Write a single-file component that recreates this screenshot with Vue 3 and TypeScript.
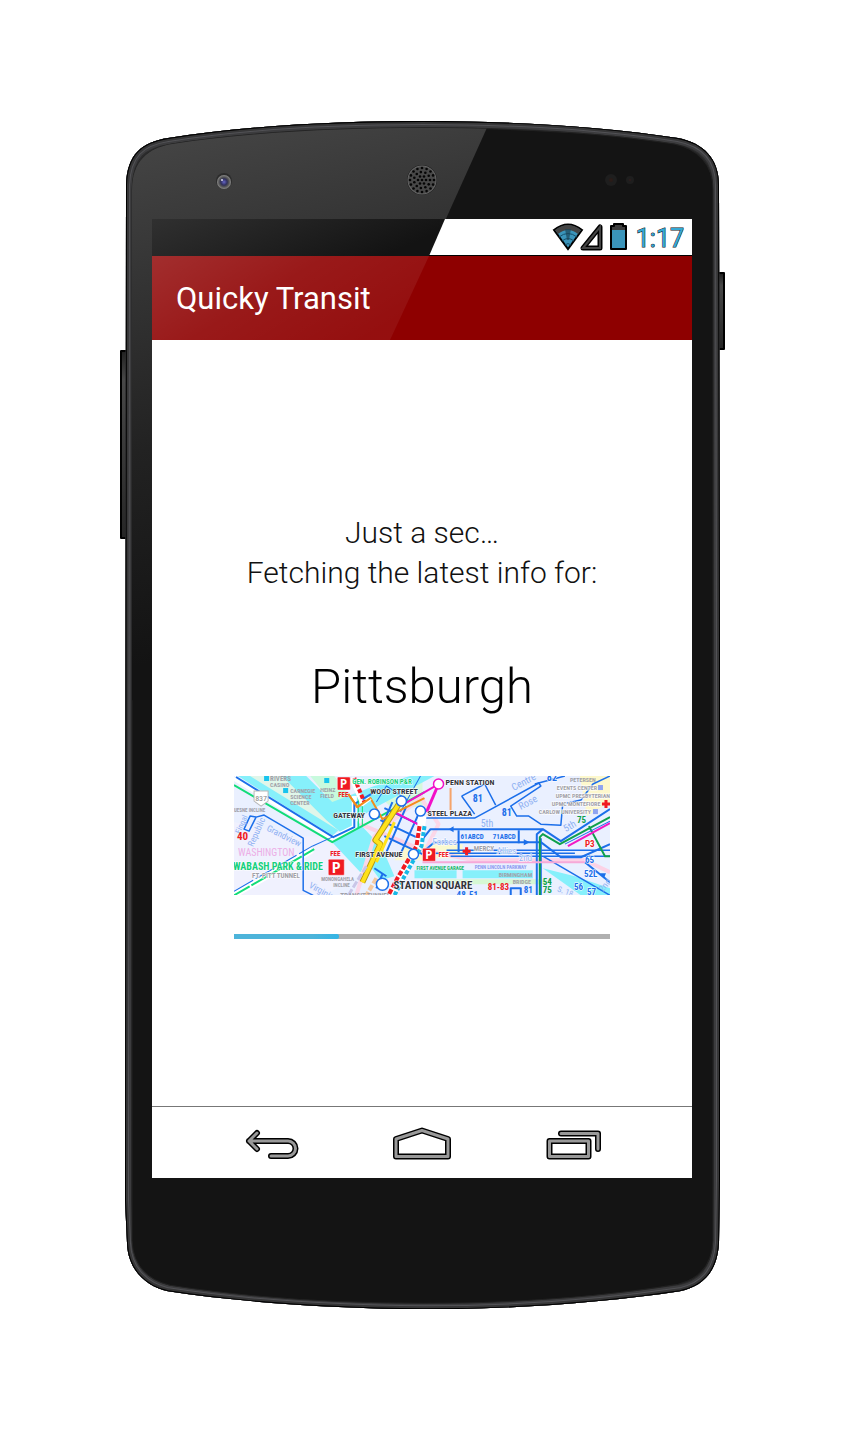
<script setup lang="ts">
interface Label {
  t: string
  x: number
  y: number
  s: number
  c: string
  r?: number
  w?: number
  halo?: boolean
}
interface Stroke {
  d: string
  c: string
  w: number
  dash?: string
}

const ink = '#33343c'
const grey = '#a0a0a8'
const blue = '#1c6fea'
const green = '#12dc78'
const darkGreen = '#0fa04c'
const red = '#f01a22'
const street = '#8fb0f2'

const areas = [
  { d: 'M0 46 L60 60 L120 60 L140 90 L90 119 L0 119Z', c: '#f0f1fe' },
  { d: 'M14 0 H60 L92 30 L104 56 L80 48Z', c: '#e0f6ea' },
  { d: 'M76 0 H100 L126 34 L112 44Z', c: '#c8fadd' },
  { d: 'M140 16 L188 2 V30 L160 34Z', c: '#d6f8dc' },
  { d: 'M170 70 H188 V84 H160Z', c: '#fdf8cc' },
  { d: 'M345 0 H375 V26 L352 40Z', c: '#fdf8cc' },
  { d: 'M188 68 H228 V82 H188Z', c: '#fbf9cf' },
  { d: 'M188 103 H312 V108 H188Z', c: '#d6f8d4' },
]
const water = [
  'M48 0 H72 L98 26 L140 10 L176 0 H200 L140 32 L122 44 L148 72 L160 100 L146 104 L118 66 L92 44Z',
  'M4 0 H16 L104 54 L98 60Z',
  'M98 66 L112 58 L136 80 L126 96Z',
  'M180 94 H222 V102 H180Z',
  'M228 94 H298 V102 H228Z',
  'M308 92 L340 100 L375 112 V119 H346Z',
]

const strokes: Stroke[] = [
  { d: 'M126 48 L188 74 L240 84 H350 L375 96', c: '#fbd2e6', w: 4 },
  { d: 'M122 119 L140 60 L188 20', c: '#fbd7e8', w: 4 },
  { d: 'M188 80 L204 48 L188 24', c: '#fbd7e8', w: 4 },
  { d: 'M0 2 L98 62 L120 51 V20', c: '#ffffff', w: 5 },
  { d: 'M0 9 L98 66 L135 46 L190 16', c: green, w: 2 },
  { d: 'M2 1 L99 61 L120 51 V28 L140 16', c: blue, w: 2 },
  { d: 'M0 119 L78 74', c: '#ffffff', w: 6 },
  { d: 'M0 119 L80 73', c: green, w: 2, dash: '18 2' },
  { d: 'M0 115 L78 70', c: blue, w: 1, dash: '22 3' },
  { d: 'M78 70 L98 61', c: blue, w: 1 },
  { d: 'M22 41 L16 40 L10 53 L15 55 L22 41 L30 39 L69 62 V114 L79 119', c: blue, w: 1.5 },
  { d: 'M124 20 V52 M128 30 V50', c: green, w: 1 },
  { d: 'M150 32 L188 50 M146 44 L188 64 M158 26 L144 58 M172 30 L152 76 M184 38 L166 78 M150 60 L188 78 M140 92 L152 100 M148 98 L142 112', c: blue, w: 2 },
  { d: 'M186 0 L166 36 M170 22 L152 10 L142 26', c: blue, w: 1 },
  { d: 'M188 42 H240 L304 7 L306 10 L276 30 L282 40 H294 L306 48 L326 49 L328 26', c: blue, w: 1.5 },
  { d: 'M227 20 L250 8 L261 29 M227 20 L240 38', c: blue, w: 1.5 },
  { d: 'M300 8 L330 0 M328 28 L346 24 L358 8 L375 0', c: blue, w: 1.5 },
  { d: 'M188 63 L196 53 H308 L326 65 L375 33', c: blue, w: 2 },
  { d: 'M188 76 L200 66 H306 L326 81 H346 L375 68', c: blue, w: 2 },
  { d: 'M224 54 V76 M284 54 V67', c: blue, w: 2 },
  { d: 'M212 74 H375 M200 77 H340 M216 80 H375 M308 80 L375 119', c: blue, w: 1.5 },
  { d: 'M302 119 V58 L308 53 M306 119 V62 M276 119 V112 H286 V119', c: blue, w: 2 },
  { d: 'M305 119 V61 L308 58 L325 68 L375 41 M354 50 L370 80 H375', c: darkGreen, w: 2 },
  { d: 'M330 68 L375 45', c: blue, w: 1 },
  { d: 'M333 70 L375 47', c: '#f219c4', w: 2 },
  { d: 'M350 86 L375 106', c: blue, w: 2 },
  { d: 'M188 86 H350', c: '#f6a9d8', w: 2 },
  { d: 'M216 12 V34', c: '#f5a46b', w: 2 },
  { d: 'M114 18 L123 31 L136 22 L148 43 L190 22', c: '#f28d1c', w: 2 },
  { d: 'M204 8 L166 30 M162 37 L185 49 L186 44', c: '#f210c8', w: 2 },
  { d: 'M204 8 L192 36', c: '#f210c8', w: 3 },
  { d: 'M167 24 L141 64 L146 68 L128 106', c: '#b99a12', w: 6 },
  { d: 'M167 24 L141 64 L146 68 L128 106', c: '#ffe21a', w: 4 },
  { d: 'M160 46 L142 86', c: '#ffe21a', w: 3 },
  { d: 'M117 2 L128 28 L136 22', c: '#ffffff', w: 4 },
  { d: 'M120 2 L130 26', c: red, w: 4, dash: '4 2' },
  { d: 'M114 18 L123 31 L136 22', c: '#f28d1c', w: 2 },
  { d: 'M188 40 L184 70 L166 102 L156 119', c: '#ffffff', w: 8 },
  { d: 'M185 50 L182 70 L164 100 L154 119', c: red, w: 4, dash: '5 2' },
  { d: 'M190 50 L187 70 L170 100 L160 119', c: '#18b9e6', w: 4, dash: '4 2' },
  { d: 'M132 90 L114 119', c: '#c9c6e8', w: 3, dash: '7 2' },
  { d: 'M142 102 L132 119', c: '#f3c9a0', w: 4, dash: '6 2' },
]

const stations = [
  { x: 140, y: 38, r: 5, c: blue },
  { x: 167, y: 25, r: 5, c: blue },
  { x: 186, y: 35, r: 5, c: blue },
  { x: 204, y: 8, r: 5, c: '#f210c8' },
  { x: 179, y: 78, r: 5, c: blue },
  { x: 148, y: 108, r: 6, c: blue },
]

const parking = [
  { x: 103, y: 1, s: 13 },
  { x: 94, y: 83, s: 16 },
  { x: 188, y: 72, s: 13 },
]

const squares = [
  { x: 30, y: 0, c: '#18c4ee' },
  { x: 49, y: 12, c: '#18c4ee' },
  { x: 90, y: 2, c: '#18c4ee' },
  { x: 363, y: 9, c: '#8fa4f0' },
  { x: 358, y: 33, c: '#8fa4f0' },
]

const labels: Label[] = [
  { t: 'RIVERS', x: 36, y: 5, s: 7, c: grey },
  { t: 'CASINO', x: 36, y: 11, s: 6, c: grey },
  { t: 'CARNEGIE', x: 56, y: 17, s: 6, c: grey },
  { t: 'SCIENCE', x: 56, y: 23, s: 6, c: grey },
  { t: 'CENTER', x: 56, y: 29, s: 6, c: grey },
  { t: 'HEINZ', x: 86, y: 16, s: 6, c: grey },
  { t: 'FIELD', x: 86, y: 22, s: 6, c: grey },
  { t: 'UESNE INCLINE', x: 0, y: 36, s: 5, c: grey },
  { t: 'Fingal', x: 6, y: 58, s: 8, c: street, r: -66, w: 400 },
  { t: 'Republic', x: 19, y: 71, s: 9, c: street, r: -66, w: 400 },
  { t: 'Grandview', x: 32, y: 54, s: 9, c: street, r: 27, w: 400 },
  { t: 'Virginia', x: 74, y: 111, s: 9, c: street, r: 28, w: 400 },
  { t: '40', x: 3, y: 64, s: 11, c: red },
  { t: 'WASHINGTON', x: 4, y: 80, s: 10, c: '#ecaee6', w: 400 },
  { t: 'WABASH PARK & RIDE', x: -1, y: 94, s: 10, c: '#14cf7c', halo: true },
  { t: 'FT. PITT TUNNEL', x: 18, y: 102, s: 7, c: grey, halo: true },
  { t: 'MONONGAHELA', x: 87, y: 105, s: 5, c: grey },
  { t: 'INCLINE', x: 99, y: 111, s: 5, c: grey },
  { t: 'TRANSIT TUNNEL', x: 106, y: 122, s: 7, c: grey },
  { t: 'FEE', x: 96, y: 80, s: 7, c: red },
  { t: 'FEE', x: 104, y: 21, s: 7, c: red },
  { t: 'FEE', x: 204, y: 81, s: 7, c: red, halo: true },
  { t: 'GEN. ROBINSON P&R', x: 118, y: 8, s: 7, c: '#14cf7c', halo: true },
  { t: 'WOOD STREET', x: 136, y: 18, s: 8, c: ink, halo: true },
  { t: 'GATEWAY', x: 99, y: 42, s: 8, c: ink, halo: true },
  { t: 'FIRST AVENUE', x: 121, y: 81, s: 8, c: ink, halo: true },
  { t: 'STATION SQUARE', x: 159, y: 113, s: 11, c: ink, halo: true },
  { t: 'PENN STATION', x: 211, y: 9, s: 8, c: ink, halo: true },
  { t: 'STEEL PLAZA', x: 193, y: 40, s: 8, c: ink, halo: true },
  { t: 'FIRST AVENUE GARAGE', x: 182, y: 94, s: 5, c: '#12b866' },
  { t: 'PENN LINCOLN PARKWAY', x: 240, y: 93, s: 5, c: '#8d9cf0' },
  { t: 'BIRMINGHAM', x: 264, y: 101, s: 6, c: grey },
  { t: 'BRIDGE', x: 278, y: 108, s: 6, c: grey },
  { t: 'Centre', x: 279, y: 15, s: 10, c: street, r: -28, w: 400 },
  { t: 'Rose', x: 286, y: 34, s: 10, c: street, r: -28, w: 400 },
  { t: '5th', x: 246, y: 51, s: 10, c: street, w: 400 },
  { t: '5th', x: 331, y: 56, s: 10, c: street, r: -30, w: 400 },
  { t: 'Forbes', x: 198, y: 69, s: 9, c: street, w: 400, halo: true },
  { t: 'Allies', x: 262, y: 78, s: 9, c: street, w: 400, halo: true },
  { t: '2nd', x: 284, y: 85, s: 9, c: street, w: 400, halo: true },
  { t: '2nd', x: 368, y: 116, s: 9, c: street, r: -50, w: 400 },
  { t: 'S. 18', x: 322, y: 115, s: 8, c: street, r: 20, w: 400 },
  { t: '81', x: 238, y: 26, s: 10, c: blue },
  { t: '81', x: 267, y: 40, s: 10, c: blue },
  { t: '82', x: 312, y: 5, s: 10, c: blue, halo: true },
  { t: '61ABCD', x: 226, y: 63, s: 7, c: blue },
  { t: '71ABCD', x: 258, y: 63, s: 7, c: blue },
  { t: 'MERCY', x: 239, y: 75, s: 7, c: grey, halo: true },
  { t: 'PETERSEN', x: 335, y: 6, s: 6, c: grey },
  { t: 'EVENTS CENTER', x: 322, y: 14, s: 6, c: grey, halo: true },
  { t: 'UPMC PRESBYTERIAN', x: 321, y: 22, s: 6, c: grey, halo: true },
  { t: 'UPMC MONTEFIORE', x: 317, y: 30, s: 6, c: grey, halo: true },
  { t: 'CARLOW UNIVERSITY', x: 304, y: 38, s: 6, c: grey, halo: true },
  { t: '75', x: 342, y: 47, s: 9, c: darkGreen },
  { t: 'P3', x: 350, y: 71, s: 9, c: red, halo: true },
  { t: '65', x: 350, y: 87, s: 9, c: blue, halo: true },
  { t: '52L', x: 349, y: 101, s: 9, c: blue, halo: true },
  { t: '56', x: 339, y: 114, s: 9, c: blue, halo: true },
  { t: '57', x: 352, y: 119, s: 9, c: blue, halo: true },
  { t: '54', x: 308, y: 109, s: 9, c: darkGreen },
  { t: '75', x: 308, y: 117, s: 9, c: darkGreen },
  { t: '81', x: 289, y: 117, s: 9, c: blue },
  { t: '81-83', x: 253, y: 114, s: 9, c: red },
  { t: '48-51', x: 222, y: 122, s: 9, c: blue },
]

const speakerHoles: { x: number; y: number }[] = []
for (const [count, radius] of [[1, 0], [6, 4], [11, 8], [16, 12]]) {
  for (let i = 0; i < count; i++) {
    const a = (i / count) * Math.PI * 2
    speakerHoles.push({ x: 422 + radius * Math.cos(a), y: 180 + radius * Math.sin(a) })
  }
}

const outline =
  'M126 185 C127 154 142 142 168 138 C250 125 340 121 423 121 C510 121 600 126 678 138 C704 143 719 159 719 185 L720 650 V1180 L719 1243 C717 1273 702 1286 680 1291 C600 1303 510 1309 423 1309 C330 1308 240 1302 168 1291 C146 1286 128 1270 127 1243 L125 1200 L126 185Z'
const glass =
  'M132 190 C132 161 148 148 172 144 C250 132 340 128 423 128 C510 128 600 132 674 144 C698 149 713 164 713 190 V1240 C712 1267 698 1279 678 1284 C600 1297 510 1303 423 1303 C330 1303 240 1296 170 1285 C150 1280 133 1268 132 1240Z'
</script>

<template>
  <main class="stage">
    <div class="device">
      <svg class="shell" viewBox="120 121 606 1188" preserveAspectRatio="none" aria-hidden="true">
        <defs>
          <linearGradient id="shine" gradientUnits="userSpaceOnUse" x1="132" y1="130" x2="250" y2="640">
            <stop offset="0" stop-color="#464646" />
            <stop offset="0.3" stop-color="#333333" />
            <stop offset="0.6" stop-color="#222222" />
            <stop offset="1" stop-color="#131313" />
          </linearGradient>
          <linearGradient id="side" x1="0" y1="0" x2="0" y2="1">
            <stop offset="0" stop-color="#222" />
            <stop offset="0.15" stop-color="#484848" />
            <stop offset="1" stop-color="#262626" />
          </linearGradient>
          <radialGradient id="lens">
            <stop offset="0" stop-color="#6464c8" />
            <stop offset="0.45" stop-color="#30305a" />
            <stop offset="0.7" stop-color="#555" />
            <stop offset="1" stop-color="#8a8a8a" />
          </radialGradient>
          <clipPath id="body"><path :d="outline" /></clipPath>
          <clipPath id="face"><path :d="glass" /></clipPath>
        </defs>
        <rect x="120" y="350" width="9" height="189" rx="1" fill="#000" />
        <rect x="122" y="352" width="5" height="185" fill="url(#side)" />
        <rect x="717" y="272" width="8" height="78" rx="1" fill="#000" />
        <rect x="719" y="274" width="4" height="74" fill="url(#side)" />
        <path :d="outline" fill="#2b2b2c" />
        <g clip-path="url(#body)" fill="none">
          <path :d="outline" stroke="#3c3c3e" stroke-width="12" />
          <path :d="outline" stroke="#525256" stroke-width="8" />
          <path :d="outline" stroke="#363637" stroke-width="6" />
          <path :d="outline" stroke="#000" stroke-width="2" />
        </g>
        <path :d="glass" fill="#141414" stroke="#222" />
        <g clip-path="url(#face)">
          <path d="M120 121 H490 L229 700 H120Z" fill="url(#shine)" />
        </g>
        <circle cx="224" cy="181" r="8" fill="#2c2c2c" />
        <circle cx="224" cy="182" r="7" fill="url(#lens)" />
        <circle cx="222" cy="180" r="1" fill="#dde" />
        <circle cx="422" cy="180" r="15" fill="#1d1d1d" />
        <circle cx="422" cy="180" r="14" fill="#484848" stroke="#666" />
        <circle v-for="(h, i) in speakerHoles" :key="i" :cx="h.x" :cy="h.y" r="1.3" fill="#050505" />
        <circle cx="611" cy="180" r="6" fill="#1e1e1e" />
        <circle cx="611" cy="180" r="2" fill="#2a1c18" />
        <circle cx="630" cy="180" r="4" fill="#1e1e1e" />
        <circle cx="630" cy="180" r="1" fill="#301c1c" />
      </svg>

      <section class="screen">
        <div class="top">
          <div class="status">
            <svg class="signals" width="76" height="30" viewBox="551 222 76 30" role="img" aria-label="Wi-Fi, signal and battery">
              <path d="M554 230 Q568 219 582 230 L568 249Z" fill="#3a94ba" stroke="#000" stroke-width="2" />
              <path d="M555 230 Q568 220 581 230 L578 234 Q568 226 558 234Z" fill="#444" />
              <path d="M559 237 Q568 230 577 237 M562 241 Q568 236 574 241 M565 245 Q568 242 571 245" fill="none" stroke="#17506a" stroke-width="1" />
              <path d="M565 229 H571 L569 240 H567Z" fill="#1b465a" opacity="0.7" />
              <path d="M583 248 L600 227 V248Z" fill="none" stroke="#000" stroke-width="5" stroke-linejoin="round" />
              <path d="M583 248 L600 227 V248Z" fill="none" stroke="#444" stroke-width="2" />
              <path d="M611 226 H614 V224 H623 V226 H626 V249 H611Z" fill="#3d3d3d" stroke="#000" stroke-width="2" stroke-linejoin="round" />
              <rect x="612" y="230" width="13" height="18" fill="#3a94ba" />
            </svg>
            <time class="clock">1:17</time>
          </div>
          <header class="bar"><h1>Quicky Transit</h1></header>
          <svg class="glare" viewBox="0 0 540 121" preserveAspectRatio="none" aria-hidden="true">
            <defs>
              <linearGradient id="dark" x1="0" y1="0" x2="1" y2="0.3">
                <stop offset="0" stop-color="#303030" />
                <stop offset="1" stop-color="#131313" />
              </linearGradient>
              <linearGradient id="tint" x1="0" y1="0" x2="1" y2="0.5">
                <stop offset="0" stop-color="#fff" stop-opacity="0.18" />
                <stop offset="0.5" stop-color="#fff" stop-opacity="0.1" />
                <stop offset="1" stop-color="#fff" stop-opacity="0.06" />
              </linearGradient>
            </defs>
            <path d="M0 0 H293 L277 37 H0Z" fill="url(#dark)" />
            <path d="M0 37 H277 L238 121 H0Z" fill="url(#tint)" />
          </svg>
        </div>

        <div class="content">
          <p class="message">Just a sec…<br />Fetching the latest info for:</p>
          <h2 class="city">Pittsburgh</h2>
          <svg class="map" viewBox="0 0 375 119" role="img" aria-label="Pittsburgh transit map">
            <rect width="375" height="119" fill="#eaf0ff" />
            <path v-for="(a, i) in areas" :key="'a' + i" :d="a.d" :fill="a.c" />
            <path v-for="(d, i) in water" :key="'w' + i" :d="d" fill="#86f0fb" />
            <path
              v-for="(s, i) in strokes"
              :key="'s' + i"
              :d="s.d"
              :stroke="s.c"
              :stroke-width="s.w"
              :stroke-dasharray="s.dash"
              fill="none"
              stroke-linejoin="round"
            />
            <path d="M214 53 L219 50 V56Z M295 66 L289 63 V69Z M365 97 L371 97 L369 102Z" :fill="blue" />
            <rect v-for="(q, i) in squares" :key="'q' + i" :x="q.x" :y="q.y" width="5" height="5" :fill="q.c" />
            <path d="M20 15 H34 V25 L27 30 L20 25Z" fill="#fff" stroke="#b8b8b8" />
            <text class="lbl" x="27" y="25" font-size="8" text-anchor="middle" fill="#888">837</text>
            <text
              v-for="(l, i) in labels"
              :key="'l' + i"
              class="lbl"
              :class="{ halo: l.halo }"
              :x="l.x"
              :y="l.y"
              :font-size="l.s"
              :font-weight="l.w ?? 700"
              :fill="l.c"
              :transform="l.r ? `rotate(${l.r} ${l.x} ${l.y})` : undefined"
            >{{ l.t }}</text>
            <path d="M232 71 V79 M228 75 H236 M371 24 V32 M367 28 H375" :stroke="red" stroke-width="3" />
            <circle v-for="(s, i) in stations" :key="'c' + i" :cx="s.x" :cy="s.y" :r="s.r" fill="#fff" :stroke="s.c" stroke-width="1.5" />
            <g v-for="(p, i) in parking" :key="'p' + i">
              <rect :x="p.x" :y="p.y" :width="p.s" :height="p.s" rx="1" :fill="red" stroke="#fff" stroke-width="0.5" />
              <text class="lbl" :x="p.x + p.s / 2" :y="p.y + p.s - 2" :font-size="p.s - 1" font-weight="700" text-anchor="middle" fill="#fff">P</text>
            </g>
          </svg>
          <progress class="progress" max="100" value="28" aria-label="Fetching transit info"></progress>
        </div>

        <nav class="nav" aria-label="System">
          <button type="button" aria-label="Back">
            <svg width="60" height="36" viewBox="242 1125 60 36">
              <g v-for="k in 2" :key="k" fill="none" :stroke="k === 1 ? '#000' : '#999'" :stroke-width="k === 1 ? 6 : 3" stroke-linecap="round" stroke-linejoin="round">
                <path d="M257 1133 L249 1141 L257 1149 M249 1141 H288 a7.5 7.5 0 0 1 0 15 H271" />
              </g>
            </svg>
          </button>
          <button type="button" aria-label="Home">
            <svg width="60" height="36" viewBox="392 1125 60 36">
              <g v-for="k in 2" :key="k" fill="none" :stroke="k === 1 ? '#000' : '#999'" :stroke-width="k === 1 ? 6 : 3" stroke-linejoin="round">
                <path d="M396 1139 L422 1130.500 L448 1139 V1156.500 H396Z" />
              </g>
            </svg>
          </button>
          <button type="button" aria-label="Recent apps">
            <svg width="60" height="36" viewBox="542 1125 60 36">
              <g v-for="k in 2" :key="k" fill="none" :stroke="k === 1 ? '#000' : '#999'" stroke-linejoin="round">
                <path d="M561 1133.500 H598 V1149" :stroke-width="k === 1 ? 6 : 3" stroke-linecap="round" />
                <path d="M549.500 1141 H588.500 V1156.500 H549.500Z" :stroke-width="k === 1 ? 6 : 3" />
              </g>
            </svg>
          </button>
        </nav>
      </section>
    </div>
  </main>
</template>

<style>
body {
  margin: 0;
  background: #fff;
}
</style>

<style scoped>
.stage {
  box-sizing: border-box;
  padding: 121px 119px 120px 120px;
  font-family: Roboto, "Liberation Sans", sans-serif;
  color: #111;
}
.device {
  position: relative;
  padding: 98px 34px 131px 32px;
}
.shell {
  position: absolute;
  inset: 0;
  width: 100%;
  height: 100%;
}
.screen {
  position: relative;
  display: flex;
  flex-direction: column;
  background: #fff;
}
.top {
  position: relative;
}
.glare {
  position: absolute;
  inset: 0;
  width: 100%;
  height: 100%;
  pointer-events: none;
}
.status {
  box-sizing: border-box;
  height: 37px;
  padding-right: 8px;
  border-bottom: 1px solid #000;
  display: flex;
  align-items: center;
  justify-content: flex-end;
  gap: 9px;
}
.signals {
  display: block;
}
.clock {
  padding-top: 3px;
  font-size: 25px;
  line-height: 34px;
  color: #35a8d4;
  -webkit-text-stroke: 1px #111;
  paint-order: stroke fill;
}
.bar {
  height: 84px;
  padding: 0 24px;
  display: flex;
  align-items: center;
  background: #8e0000;
}
.bar h1 {
  margin: 0;
  font-size: 31px;
  font-weight: 400;
  color: #fff;
}
.content {
  display: flex;
  flex-direction: column;
  align-items: center;
  padding: 173px 82px 167px;
}
.message {
  margin: 0;
  font-size: 30px;
  font-weight: 300;
  line-height: 40px;
  text-align: center;
  white-space: nowrap;
}
.city {
  margin: 64px 0 59px;
  font-size: 49px;
  font-weight: 300;
  line-height: 60px;
  color: #000;
}
.map {
  display: block;
  width: 100%;
  height: auto;
}
.lbl {
  font-family: "Liberation Sans Narrow", "Roboto Condensed", Roboto, sans-serif;
}
.halo {
  stroke: #fff;
  stroke-width: 1px;
  paint-order: stroke fill;
}
.progress {
  appearance: none;
  display: block;
  width: 100%;
  height: 5px;
  margin-top: 39px;
  border: 0;
  background: #b0b0b0;
}
.progress::-webkit-progress-bar {
  background: #b0b0b0;
}
.progress::-webkit-progress-value {
  background: linear-gradient(90deg, #4db4da 75%, #33b5e5);
  border-radius: 0 2px 2px 0;
}
.nav {
  box-sizing: border-box;
  height: 72px;
  border-top: 1px solid #777;
  display: flex;
  align-items: center;
  justify-content: center;
  gap: 90px;
}
.nav button {
  padding: 0;
  border: 0;
  background: none;
}
.nav svg {
  display: block;
}
</style>
